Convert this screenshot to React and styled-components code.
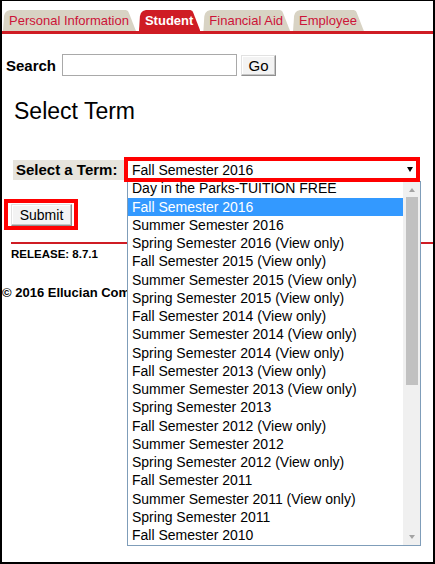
import React from "react";
import styled, { createGlobalStyle } from "styled-components";

const GlobalStyle = createGlobalStyle`
  body {
    margin: 0;
    background: #fff;
    font-family: "Liberation Sans", Arial, sans-serif;
  }
`;

const Frame = styled.div`
  width: 435px;
  height: 564px;
  box-sizing: border-box;
  border: 2px solid #000;
  border-top-width: 1px;
  overflow: hidden;
  background: #fff;
  color: #000;
`;

const TabBar = styled.nav`
  display: flex;
  padding: 9px 0 0 1px;
  border-bottom: 3px solid #cf1c24;
`;

const Tab = styled.a`
  display: block;
  height: 21px;
  line-height: 21px;
  padding: 0 7px 0 6px;
  margin-right: 3px;
  font-size: 13px;
  font-weight: ${(p) => (p.$active ? 700 : 400)};
  color: ${(p) => (p.$active ? "#fff" : "#cc1338")};
  background: ${(p) => (p.$active ? "#cf1c24" : "#d8d3c4")};
  clip-path: polygon(
    0 100%,
    1px 6px,
    2px 3px,
    4px 1px,
    7px 0,
    calc(100% - 10px) 0,
    calc(100% - 8px) 1px,
    calc(100% - 7px) 3px,
    100% 100%
  );
  text-decoration: none;
  white-space: nowrap;
`;

const SearchRow = styled.form`
  display: flex;
  align-items: center;
  height: 22px;
  margin: 20px 0 0 4px;
`;

const SearchLabel = styled.label`
  font-size: 15px;
  font-weight: 700;
  margin-right: 6px;
`;

const SearchInput = styled.input`
  width: 175px;
  height: 22px;
  box-sizing: border-box;
  margin: 0 4px 0 0;
  padding: 0 3px;
  border: 1px solid #a9a9a9;
  font: 14px "Liberation Sans", Arial, sans-serif;
`;

const Button = styled.button`
  width: ${(p) => p.$w}px;
  height: ${(p) => p.$h}px;
  box-sizing: border-box;
  margin: 0;
  padding: 0;
  background: #f3f3f3;
  border: 1px solid;
  border-color: #e2e2e2 #8e8e8e #8e8e8e #e2e2e2;
  box-shadow: inset -1px -1px 0 #c6c6c6, inset 1px 1px 0 #fff;
  font: ${(p) => p.$size}px "Liberation Sans", Arial, sans-serif;
  color: #000;
`;

const Heading = styled.h1`
  margin: 22px 0 0 12px;
  font-size: 23px;
  font-weight: 400;
  line-height: 26px;
`;

const TermRow = styled.div`
  display: flex;
  align-items: center;
  margin: 33px 0 0 11px;
`;

const TermLabel = styled.label`
  width: 111px;
  height: 20px;
  box-sizing: border-box;
  padding-left: 3px;
  line-height: 20px;
  background: #e7e4dd;
  font-size: 15px;
  font-weight: 700;
  white-space: nowrap;
`;

const SelectWrap = styled.div`
  position: relative;
`;

const SelectBox = styled.div`
  position: relative;
  z-index: 2;
  display: flex;
  align-items: center;
  justify-content: space-between;
  width: 296px;
  height: 25px;
  box-sizing: border-box;
  padding: 0 3px 0 4px;
  border: 4px solid #f00;
  background: #fff;
  font-size: 14px;
`;

const Caret = styled.span`
  width: 0;
  height: 0;
  border-left: 3px solid transparent;
  border-right: 3px solid transparent;
  border-top: 5px solid #000;
`;

const Listbox = styled.div`
  position: absolute;
  z-index: 1;
  top: calc(100% - 1px);
  left: 3px;
  display: flex;
  width: 294px;
  height: 365px;
  box-sizing: border-box;
  border: 1px solid #7f9db9;
  background: #fff;
`;

const Options = styled.div`
  flex: 1;
  overflow: hidden;
`;

const OptionList = styled.ul`
  list-style: none;
  margin: -2.56px 0 0;
  padding: 0;
`;

const Option = styled.li`
  height: 18.26px;
  line-height: 18.26px;
  padding-left: 4px;
  font-size: 14px;
  white-space: nowrap;
  color: ${(p) => (p.$selected ? "#fff" : "#000")};
  background: ${(p) => (p.$selected ? "#3399ff" : "transparent")};
`;

const Scrollbar = styled.div`
  display: flex;
  flex-direction: column;
  width: 17px;
  background: #f0f0f0;
`;

const ScrollArrow = styled.div`
  display: flex;
  align-items: center;
  justify-content: center;
  height: ${(p) => p.$h}px;

  &::before {
    content: "";
    border-left: 3.5px solid transparent;
    border-right: 3.5px solid transparent;
    ${(p) =>
      p.$down
        ? "border-top: 4px solid #a3a3a3;"
        : "border-bottom: 4px solid #a3a3a3;"}
  }
`;

const Track = styled.div`
  flex: 1;
`;

const Thumb = styled.div`
  width: 12px;
  height: 188px;
  margin: 0 auto;
  background: #c1c1c1;
`;

const SubmitFrame = styled.div`
  display: flex;
  width: fit-content;
  margin: 17px 0 0 2px;
  padding: 1px 2px 0 3px;
  border: 4px solid #f00;
`;

const Divider = styled.div`
  height: 2px;
  margin: 12px 0 0 9px;
  background: #cf1c24;
`;

const Release = styled.div`
  margin: 3px 0 0 9px;
  font-size: 11.5px;
  font-weight: 700;
  line-height: 14px;
`;

/* the open term list covers the rest of this line */
const Copyright = styled.div`
  width: 125px;
  margin-top: 24px;
  overflow: hidden;
  font-size: 13px;
  font-weight: 700;
  line-height: 15px;
  white-space: nowrap;
`;

const tabs = [
  { label: "Personal Information" },
  { label: "Student", active: true },
  { label: "Financial Aid" },
  { label: "Employee" },
];

const terms = [
  "Day in the Parks-TUITION FREE",
  "Fall Semester 2016",
  "Summer Semester 2016",
  "Spring Semester 2016 (View only)",
  "Fall Semester 2015 (View only)",
  "Summer Semester 2015 (View only)",
  "Spring Semester 2015 (View only)",
  "Fall Semester 2014 (View only)",
  "Summer Semester 2014 (View only)",
  "Spring Semester 2014 (View only)",
  "Fall Semester 2013 (View only)",
  "Summer Semester 2013 (View only)",
  "Spring Semester 2013",
  "Fall Semester 2012 (View only)",
  "Summer Semester 2012",
  "Spring Semester 2012 (View only)",
  "Fall Semester 2011",
  "Summer Semester 2011 (View only)",
  "Spring Semester 2011",
  "Fall Semester 2010",
];

const selected = 1;

export default function App() {
  return (
    <>
      <GlobalStyle />
      <Frame>
        <TabBar>
          {tabs.map((t) => (
            <Tab key={t.label} $active={t.active}>
              {t.label}
            </Tab>
          ))}
        </TabBar>

        <SearchRow onSubmit={(e) => e.preventDefault()}>
          <SearchLabel>Search</SearchLabel>
          <SearchInput type="text" />
          <Button type="submit" $w={35} $h={21} $size={15}>
            Go
          </Button>
        </SearchRow>

        <Heading>Select Term</Heading>

        <TermRow>
          <TermLabel>Select a Term:</TermLabel>
          <SelectWrap>
            <SelectBox>
              <span>{terms[selected]}</span>
              <Caret />
            </SelectBox>
            <Listbox>
              <Options>
                <OptionList>
                  {terms.map((term, i) => (
                    <Option key={term} $selected={i === selected}>
                      {term}
                    </Option>
                  ))}
                </OptionList>
              </Options>
              <Scrollbar>
                <ScrollArrow $h={15} />
                <Track>
                  <Thumb />
                </Track>
                <ScrollArrow $h={16} $down />
              </Scrollbar>
            </Listbox>
          </SelectWrap>
        </TermRow>

        <SubmitFrame>
          <Button type="button" $w={61} $h={22} $size={14}>
            Submit
          </Button>
        </SubmitFrame>

        <Divider />
        <Release>RELEASE: 8.7.1</Release>
        <Copyright>© 2016 Ellucian Company L.P. and its affiliates.</Copyright>
      </Frame>
    </>
  );
}
